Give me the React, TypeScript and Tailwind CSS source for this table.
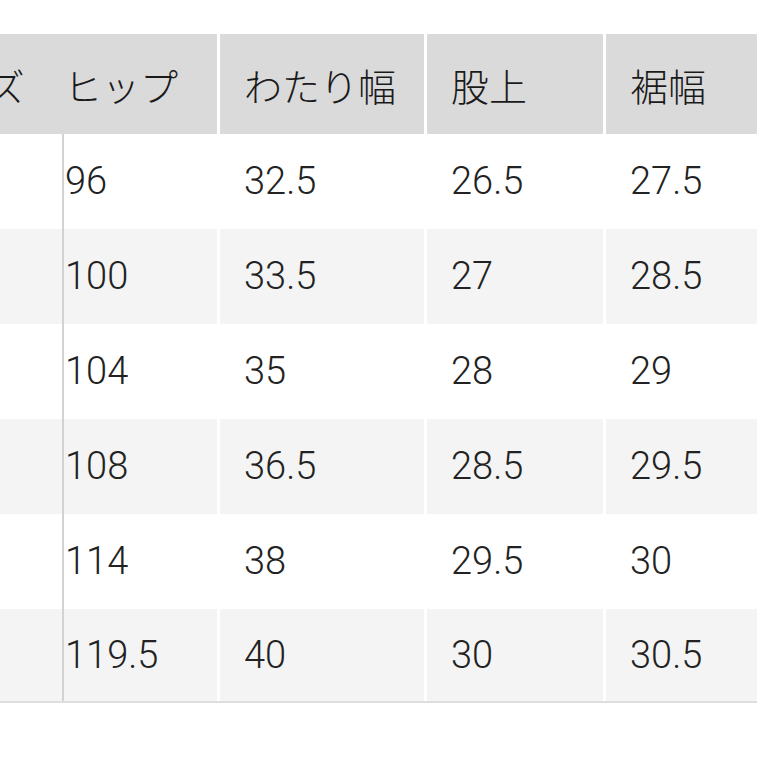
import React from "react";

const rows = [
  ["96", "32.5", "26.5", "27.5"],
  ["100", "33.5", "27", "28.5"],
  ["104", "35", "28", "29"],
  ["108", "36.5", "28.5", "29.5"],
  ["114", "38", "29.5", "30"],
  ["119.5", "40", "30", "30.5"],
];

export default function App() {
  return (
    <div className="w-[757px] h-[757px] overflow-hidden bg-white pt-[34px]" style={{ fontFamily: "Roboto, 'Noto Sans CJK JP', sans-serif" }}>
      {/* header */}
      <div className="flex gap-[3px] h-[100px] w-[800px]" style={{ fontFamily: "'Noto Sans CJK JP', 'Noto Sans', sans-serif" }}>
        <div className="w-[217px] bg-[#dadada] flex items-center overflow-hidden text-[38px] font-light text-[#1a1a1a] whitespace-nowrap">
          <span className="ml-[-88px] w-[114px] shrink-0">サイズ</span>
          <span className="ml-[38px]">ヒップ</span>
        </div>
        <div className="w-[204px] bg-[#dadada] flex items-center pl-[24px] text-[38px] font-light text-[#1a1a1a] whitespace-nowrap">わたり幅</div>
        <div className="w-[176px] bg-[#dadada] flex items-center pl-[24px] text-[38px] font-light text-[#1a1a1a] whitespace-nowrap">股上</div>
        <div className="flex-1 bg-[#dadada] flex items-center pl-[24px] text-[38px] font-light text-[#1a1a1a] whitespace-nowrap">裾幅</div>
      </div>
      {/* body */}
      <div className="w-[800px] border-b-2 border-[#dedede]">
        {rows.map((r, i) => {
          const bg = i % 2 === 1 ? "bg-[#f4f4f4]" : "bg-white";
          const h = i === rows.length - 1 ? "h-[92px]" : "h-[95px]";
          return (
            <div key={i} className={`flex gap-[3px] bg-white ${h}`}>
              <div className={`w-[217px] flex ${bg}`}>
                <div className="w-[64px] border-r-2 border-[#d2d2d2] shrink-0" />
                <div className="flex items-center pl-[1px] text-[38px] font-light text-[#222]">{r[0]}</div>
              </div>
              <div className={`w-[204px] ${bg} flex items-center pl-[24px] text-[38px] font-light text-[#222]`}>{r[1]}</div>
              <div className={`w-[176px] ${bg} flex items-center pl-[24px] text-[38px] font-light text-[#222]`}>{r[2]}</div>
              <div className={`flex-1 ${bg} flex items-center pl-[24px] text-[38px] font-light text-[#222]`}>{r[3]}</div>
            </div>
          );
        })}
      </div>
    </div>
  );
}
